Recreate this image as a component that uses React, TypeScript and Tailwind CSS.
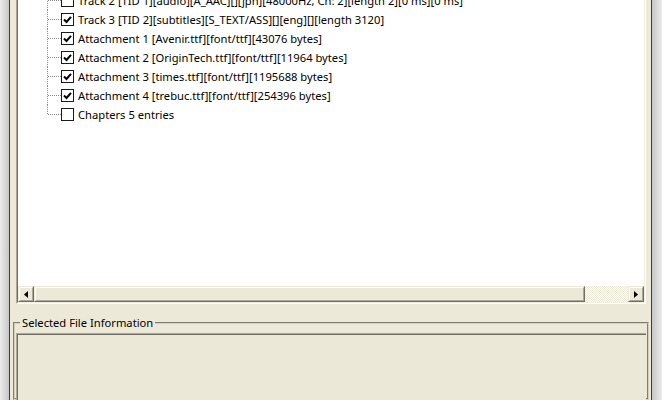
import React from "react";

const rows = [
  { label: "Track 2 [TID 1][audio][A_AAC][][jpn][48000Hz, Ch: 2][length 2][0 ms][0 ms]", checked: false },
  { label: "Track 3 [TID 2][subtitles][S_TEXT/ASS][][eng][][length 3120]", checked: true },
  { label: "Attachment 1 [Avenir.ttf][font/ttf][43076 bytes]", checked: true },
  { label: "Attachment 2 [OriginTech.ttf][font/ttf][11964 bytes]", checked: true },
  { label: "Attachment 3 [times.ttf][font/ttf][1195688 bytes]", checked: true },
  { label: "Attachment 4 [trebuc.ttf][font/ttf][254396 bytes]", checked: true },
  { label: "Chapters 5 entries", checked: false },
];

function TreeLines({ last }: { last: boolean }) {
  return (
    <svg width="14" height="19" viewBox="0 0 14 19" shapeRendering="crispEdges" className="shrink-0">
      <line x1="0.5" y1="0" x2="0.5" y2={last ? 10 : 19} stroke="#8a8a8a" strokeDasharray="1 1" />
      <line x1="1" y1="9.5" x2="14" y2="9.5" stroke="#8a8a8a" strokeDasharray="1 1" />
    </svg>
  );
}

function CheckBox({ checked }: { checked: boolean }) {
  return (
    <div className="w-[13px] h-[13px] shrink-0 border-[1.5px] border-[#1a1a1a] bg-white flex items-center justify-center">
      {checked && (
        <svg width="9" height="9" viewBox="0 0 9 9">
          <path d="M1 4.5 L3.5 7 L8 1.8" fill="none" stroke="#000" strokeWidth="2" />
        </svg>
      )}
    </div>
  );
}

function Raised({ className, children }: { className?: string; children?: React.ReactNode }) {
  return (
    <div className={`border border-t-[#ece9d8] border-l-[#ece9d8] border-r-[#716f64] border-b-[#716f64] ${className ?? ""}`}>
      <div className="w-full h-full border border-t-white border-l-white border-r-[#aca899] border-b-[#aca899] bg-[#ece9d8] flex items-center justify-center">
        {children}
      </div>
    </div>
  );
}

export default function App() {
  return (
    <div className="w-[662px] h-[400px] flex overflow-hidden font-['Noto_Sans',sans-serif] text-[11.2px] text-black">
      <div className="w-[9px] bg-gradient-to-r from-[#ececec] to-[#c6c6c6]" />
      <div className="w-px bg-[#3d3d3d]" />
      <div className="flex-1 bg-[#ece9d8] flex flex-col">
        <div className="shrink-0 ml-[6px] mr-[5px] h-[304px] border-l border-r border-b border-l-[#aca899] border-r-white border-b-white">
          <div className="h-full flex flex-col border-l border-r border-b border-l-[#716f64] border-r-[#f1efe2] border-b-[#f1efe2]">
            <div className="flex-1 bg-white overflow-hidden">
              <div className="-mt-[9px]">
                {rows.map((r, i) => (
                  <div key={i} className="h-[19px] flex items-center pl-[29px]">
                    <TreeLines last={i === rows.length - 1} />
                    <CheckBox checked={r.checked} />
                    <span className="ml-[4px] whitespace-nowrap leading-[19px]">{r.label}</span>
                  </div>
                ))}
              </div>
            </div>
            <div className="h-[16px] shrink-0 flex">
              <Raised className="w-[16px]">
                <svg width="4" height="7" viewBox="0 0 4 7">
                  <path d="M4 0 L0 3.5 L4 7 Z" fill="#000" />
                </svg>
              </Raised>
              <Raised className="flex-1" />
              <div className="w-[43px] bg-[image:repeating-conic-gradient(#ece9d8_0%_25%,#ffffff_0%_50%)] bg-size-[2px_2px]" />
              <Raised className="w-[16px]">
                <svg width="4" height="7" viewBox="0 0 4 7">
                  <path d="M0 0 L4 3.5 L0 7 Z" fill="#000" />
                </svg>
              </Raised>
            </div>
          </div>
        </div>
        <fieldset className="mt-[11px] ml-[3px] mr-[2px] flex-1 min-h-0 border-2 [border-style:groove] border-[#d4d0c0] px-[1px] pt-[3px]">
          <legend className="ml-[4px] px-[2px] leading-[15px]">Selected File Information</legend>
          <div className="h-[100px] border-t border-l border-t-[#aca899] border-l-[#aca899]">
            <div className="h-full border-t border-l border-t-[#716f64] border-l-[#716f64] bg-[#ebe8d8]" />
          </div>
        </fieldset>
      </div>
      <div className="w-px bg-[#3d3d3d]" />
      <div className="w-[10px] bg-gradient-to-r from-[#c6c6c6] to-[#ececec]" />
    </div>
  );
}
